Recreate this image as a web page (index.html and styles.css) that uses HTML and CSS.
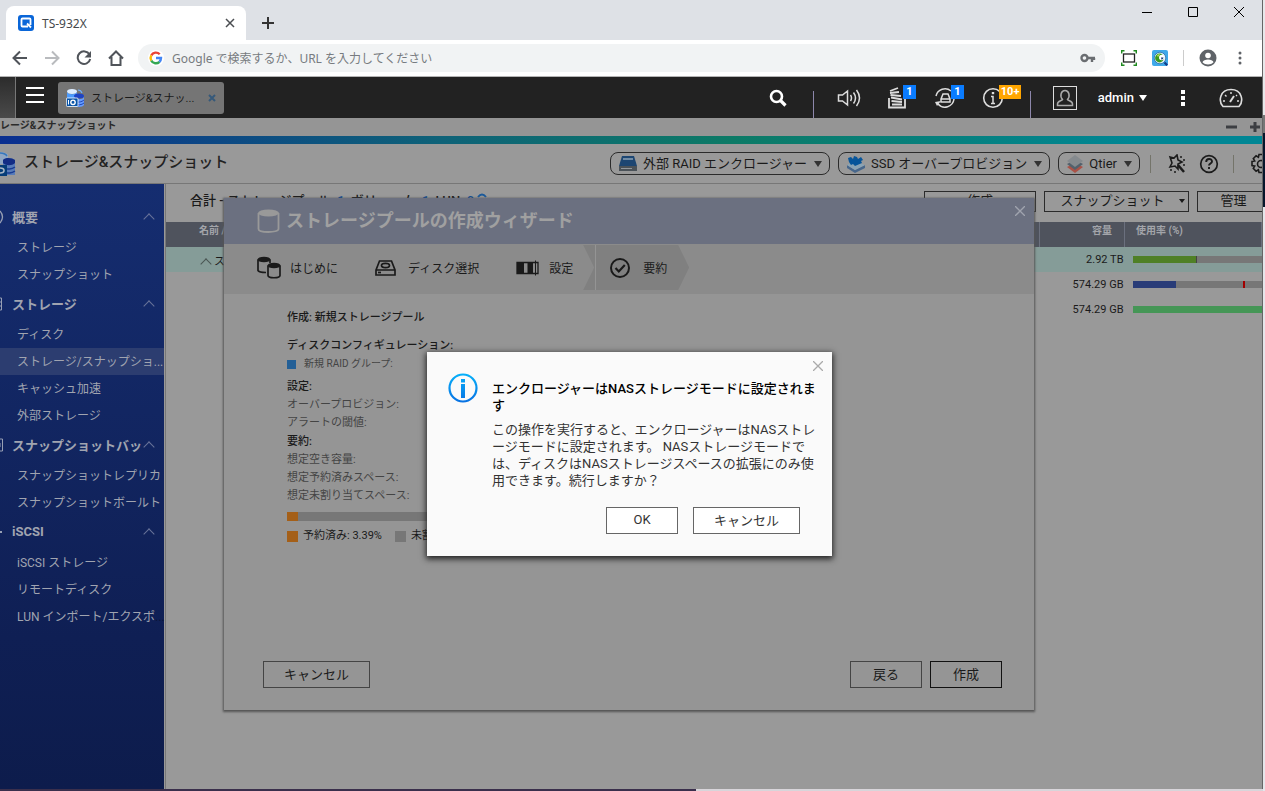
FILE: index.html
```html
<!DOCTYPE html>
<html lang="ja">
<head>
  <meta charset="UTF-8">
  <meta name="viewport" content="width=device-width, initial-scale=1.0">
  <title>TS-932X</title>
  <link rel="stylesheet" href="styles.css">
</head>
<body>
<div class="browser">

  <!-- Tab strip -->
  <div class="tab-strip">
    <div class="tab">
      <svg width="16" height="16" viewBox="0 0 16 16"><rect width="16" height="16" rx="3" fill="#0a66d8"/><path d="M10 11.5H4.500a1 1 0 0 1-1-1v-6a1 1 0 0 1 1-1h7a1 1 0 0 1 1 1V10M9 8.500l4 4" fill="none" stroke="#fff" stroke-width="1.800"/></svg>
      <span class="tab-title">TS-932X</span>
      <button class="icon-btn" aria-label="タブを閉じる"><svg width="10" height="10" viewBox="0 0 10 10"><path d="M1 1l8 8M9 1L1 9" stroke="#4a4d51" stroke-width="1.500"/></svg></button>
    </div>
    <button class="icon-btn new-tab" aria-label="新しいタブ"><svg width="12" height="12" viewBox="0 0 12 12"><path d="M6 0v12M0 6h12" stroke="#333" stroke-width="2"/></svg></button>
    <div class="window-controls">
      <button class="icon-btn" aria-label="最小化"><svg width="10" height="10" viewBox="0 0 10 10"><path d="M0 5.500h10" stroke="#000"/></svg></button>
      <button class="icon-btn" aria-label="最大化"><svg width="10" height="10" viewBox="0 0 10 10"><path d="M.5.5h9v9h-9z" fill="none" stroke="#000"/></svg></button>
      <button class="icon-btn" aria-label="閉じる"><svg width="10" height="10" viewBox="0 0 10 10"><path d="M0 0l10 10M10 0L0 10" stroke="#000"/></svg></button>
    </div>
  </div>

  <!-- Address bar -->
  <div class="toolbar">
    <button class="icon-btn" aria-label="戻る"><svg width="16" height="16" viewBox="0 0 16 16"><path d="M15 8H2M8 1.500L1.500 8 8 14.500" fill="none" stroke="#50545a" stroke-width="2"/></svg></button>
    <button class="icon-btn" aria-label="進む"><svg width="16" height="16" viewBox="0 0 16 16"><path d="M1 8h13M8 1.500L14.500 8 8 14.500" fill="none" stroke="#b9bbbe" stroke-width="2"/></svg></button>
    <button class="icon-btn" aria-label="再読み込み"><svg width="16" height="16" viewBox="0 0 16 16"><path d="M13.500 4.500A6.300 6.300 0 1 0 14.200 9" fill="none" stroke="#50545a" stroke-width="2"/><path d="M15 1v6.500H8.500z" fill="#50545a"/></svg></button>
    <button class="icon-btn" aria-label="ホーム"><svg width="16" height="16" viewBox="0 0 16 16"><path d="M1 8.500L8 1.500l7 7M3.500 7v8h9V7" fill="none" stroke="#50545a" stroke-width="2"/></svg></button>
    <div class="omnibox">
      <svg width="16" height="16" viewBox="0 0 16 16"><circle cx="8" cy="8" r="8" fill="#fff"/><g fill="none" stroke-width="2.400"><path d="M3.300 5.400A5.200 5.200 0 0 1 11.700 4.300" stroke="#ea4335"/><path d="M3.300 10.600a5.300 5.300 0 0 1 0-5.200" stroke="#fbbc05"/><path d="M11.500 11.800a5.200 5.200 0 0 1-8.200-1.200" stroke="#34a853"/><path d="M8 8h5a5.300 5.300 0 0 1-1.600 3.800" stroke="#4285f4"/></g></svg>
      <input type="text" aria-label="アドレス" placeholder="Google で検索するか、URL を入力してください">
      <svg width="16" height="10" viewBox="0 0 16 10"><circle cx="4.500" cy="5" r="3" fill="none" stroke="#6a6d71" stroke-width="2.400"/><path d="M7 5h8M12 5v4M14 5v2" stroke="#6a6d71" stroke-width="2.400"/></svg>
    </div>
    <div class="extensions">
      <svg width="16" height="16" viewBox="0 0 16 16"><path d="M.7 3.500V.7h2.800M12.500.7h2.800v2.800M15.300 12.500v2.800h-2.800M3.500 15.300H.7v-2.800" fill="none" stroke="#1f8a1f" stroke-width="1.400"/><rect x="2.500" y="4" width="11" height="8" fill="none" stroke="#222" stroke-width="1.300"/></svg>
      <svg width="16" height="16" viewBox="0 0 16 16"><rect width="16" height="16" rx="2" fill="#3fa9ea"/><circle cx="8" cy="8" r="5.800" fill="#dff0fa" stroke="#2c6ea6" stroke-width=".8"/><circle cx="7.500" cy="8" r="4.400" fill="#3a9a1d"/><path d="M5 5.500q1.500-2 3-1.500L6 7z" fill="#c5e35a"/><circle cx="9.700" cy="7.500" r="2.700" fill="#fff"/><path d="M9 7.500h2.500a2.500 2.500 0 0 1-2 2.300z" fill="#1c3f7a"/><path d="M12.500 12.500l2.800 2.800" stroke="#123c8a" stroke-width="2.200"/></svg>
      <span class="ext-divider"></span>
      <svg width="18" height="18" viewBox="0 0 18 18"><circle cx="9" cy="9" r="8.500" fill="#5f6368"/><circle cx="9" cy="6.500" r="2.800" fill="#fff"/><path d="M3.500 13.300c1-3.600 10-3.600 11 0-2.800 3-8.200 3-11 0z" fill="#fff"/></svg>
      <svg width="4" height="14" viewBox="0 0 4 14" fill="#5f6368"><circle cx="2" cy="2" r="1.500"/><circle cx="2" cy="7" r="1.500"/><circle cx="2" cy="12" r="1.500"/></svg>
    </div>
  </div>

  <!-- QTS desktop bar -->
  <div class="desktop-bar">
    <span class="desktop-edge"></span>
    <button class="icon-btn burger" aria-label="メニュー"><svg width="18" height="16" viewBox="0 0 18 16"><path d="M0 1h18M0 8h18M0 15h18" stroke="#fff" stroke-width="2"/></svg></button>
    <div class="task">
      <svg width="18" height="18" viewBox="0 0 18 18"><ellipse cx="6" cy="2.500" rx="5" ry="2.500" fill="#dcecff"/><path d="M1 3v6h10V3c-1 3-9 3-10 0z" fill="#4b9bff"/><path d="M12 1q3 0 4 3" fill="none" stroke="#6fb0ff" stroke-width="1.200"/><ellipse cx="13" cy="7" rx="5" ry="2.500" fill="#1d43c4"/><path d="M8 8v8c1 2.500 9 2.500 10 0V8c-1 3-9 3-10 0z" fill="#669dff"/><path d="M9 12c2 2 7 1 9-1M9 15c2 1.500 7 1 9-1" stroke="#2047b8" fill="none"/><rect x=".4" y="9" width="11.600" height="8.500" rx="1" fill="#0753a8" stroke="#fff" stroke-width=".8"/><circle cx="7" cy="13.300" r="2.200" fill="none" stroke="#fff" stroke-width="1.400"/><path d="M2.500 11v4.500" stroke="#fff"/></svg>
      <span class="task-name">ストレージ&amp;スナッ...</span>
      <button class="icon-btn" aria-label="閉じる"><svg width="8" height="8" viewBox="0 0 8 8"><path d="M1 1l6 6M7 1L1 7" stroke="#36597a" stroke-width="2"/></svg></button>
    </div>
    <div class="tray">
      <button class="icon-btn tray-search" aria-label="検索"><svg width="18" height="18" viewBox="0 0 18 18"><circle cx="7.500" cy="7.500" r="5.500" fill="none" stroke="#fff" stroke-width="2.600"/><path d="M11.500 11.500l5 5" stroke="#fff" stroke-width="3.200"/></svg></button>
      <span class="tray-divider"></span>
      <div class="tray-group">
        <button class="icon-btn" aria-label="音量"><svg width="24" height="20" viewBox="0 0 24 20"><g fill="none" stroke="#ddd" stroke-width="1.500"><path d="M1.500 7v6h4l5 4V3l-5 4zM13.500 7q2 3 0 6M16.500 4.500q4 5.500 0 11M19.500 2q6 8 0 16"/></g></svg></button>
        <button class="icon-btn" aria-label="タスク"><svg width="20" height="22" viewBox="0 0 20 22"><path d="M2 11v9.500h16V11" fill="none" stroke="#ddd" stroke-width="1.800"/><path d="M5 17.500h10M4.500 14l10.500 1M4 10.500l11 2M3.500 8L14 9M3 6l9-1M3 4l8-3" stroke="#ddd" stroke-width="1.800"/></svg><span class="badge">1</span></button>
        <button class="icon-btn" aria-label="外部デバイス"><svg width="22" height="22" viewBox="0 0 22 22"><g fill="none" stroke="#ddd" stroke-width="1.500"><path d="M2 9A9.200 9.200 0 0 1 17 4M20 12A9.200 9.200 0 0 1 4 17"/><path d="M7 12l2-5h5l2 5v3H7zM7 12h9"/></g><path d="M1 15l6-1-4 5z" fill="#ddd"/></svg><span class="badge">1</span></button>
        <button class="icon-btn" aria-label="通知"><svg width="22" height="22" viewBox="0 0 22 22"><circle cx="11" cy="11" r="9.300" fill="none" stroke="#ddd" stroke-width="1.600"/><path d="M9 9.500h2v7M9 16.500h4" fill="none" stroke="#ddd" stroke-width="1.500"/><path d="M11 5v2.200" stroke="#ddd" stroke-width="2.400"/></svg><span class="badge badge-warn">10+</span></button>
      </div>
      <span class="tray-divider"></span>
      <button class="icon-btn user" aria-label="ユーザー"><svg width="24" height="24" viewBox="0 0 24 24"><g fill="none" stroke="#aaa"><rect x=".5" y=".5" width="23" height="23" stroke="#ddd"/><path d="M9.500 13.500C6.500 10 8 4.500 12 4.500s5.500 5.500 2.500 9c1 1.500 5 1.500 5 4.500v1.500h-15V18c0-3 4-3 5-4.500z" stroke-width="1.500"/></g></svg></button>
      <button class="admin">admin <span class="caret"></span></button>
      <button class="icon-btn" aria-label="その他"><svg width="6" height="18" viewBox="0 0 6 18" fill="#fff"><path d="M1 1h4v4H1zM1 7h4v4H1zM1 13h4v4H1z"/></svg></button>
      <button class="icon-btn gauge" aria-label="ダッシュボード"><svg width="24" height="20" viewBox="0 0 24 20"><path d="M4 18.500C-1 13 1 1.500 12 1.500S25 13 20 18.500z" fill="none" stroke="#ddd" stroke-width="1.600"/><path d="M11 14l4-6" stroke="#ddd" stroke-width="2"/><path d="M4 13h2M18 13h2M6 7l1.500 1.500M12 4v2M18 7l-1 1" stroke="#ddd" stroke-width="1.400"/></svg></button>
    </div>
  </div>

  <!-- Storage & Snapshots window -->
  <div class="app">
    <div class="app-titlebar">
      <span class="app-title">レージ&amp;スナップショット</span>
      <button class="icon-btn" aria-label="最小化"><svg width="12" height="12" viewBox="0 0 12 12"><path d="M0 6h11" stroke="#3c3e42" stroke-width="3"/></svg></button>
      <button class="icon-btn" aria-label="最大化"><svg width="12" height="12" viewBox="0 0 12 12"><path d="M1 6h10M6 1v10" stroke="#3c3e42" stroke-width="3"/></svg></button>
    </div>
    <div class="app-stripe"></div>
    <header class="app-header">
      <svg class="app-icon" width="16" height="26" viewBox="0 0 16 26"><path d="M0 1c5 0 8 2 8 3v9H0z" fill="#8fa6c4"/><path d="M0 2q5 0 7 3" fill="none" stroke="#3777bd" stroke-width="1.500"/><path d="M3 9c3-3 9-2 12 0v15H3z" fill="#587cb9"/><path d="M3 9c3-3 9-2 12 0v3c-3 3-9 3-12 0z" fill="#132d85"/><path d="M4 17c3 2 8 1 11-1M4 21c3 2 8 1 11-1" fill="none" stroke="#193d93" stroke-width="1.500"/><path d="M0 14h7v11H0z" fill="#063d78"/><path d="M0 17q4 0 4 2.500T0 22" fill="none" stroke="#a9b6c5" stroke-width="1.600"/></svg>
      <h1>ストレージ&amp;スナップショット</h1>
      <div class="header-actions">
        <button class="pill"><svg width="20" height="20" viewBox="0 0 20 20"><path d="M4 2h12l3 10H1z" fill="#1d4672"/><path d="M5 5h10" stroke="#6f8ba5" stroke-width="2"/><path d="M1 12h18v5H1z" fill="#4b5258"/><path d="M3 14.500h11" stroke="#92979c"/></svg>外部 RAID エンクロージャー<span class="caret"></span></button>
        <button class="pill"><svg width="20" height="20" viewBox="0 0 20 20"><path d="M1 11l8 5 10-5v3l-10 5-8-5z" fill="#48678b"/><path d="M1 11l7-4 11 4-10 5z" fill="#8ba4b5"/><path d="M2 4l3-1 2 2 1-3 3 1 1 2 3-2 2 3-2 1 1 2-7 3-2-2-2 1-2-3z" fill="#07559a"/></svg>SSD オーバープロビジョン<span class="caret"></span></button>
        <button class="pill"><svg width="18" height="20" viewBox="0 0 18 20"><path d="M1 13l8-4 8 4-8 6z" fill="#a95247"/><path d="M1 10l8-4 8 4-8 6z" fill="#52616c"/><path d="M1 7l8-6 8 6-8 6z" fill="#858a8e"/></svg>Qtier<span class="caret"></span></button>
        <span class="header-divider"></span>
        <button class="icon-btn" aria-label="ツール"><svg width="20" height="20" viewBox="0 0 20 20"><path d="M3 3l4 1 3-3 1 5 4 2-4 2v5l-3-3-5 1 2-4z" fill="none" stroke="#1b1b1b" stroke-width="1.600"/><path d="M11 11l6 7" stroke="#1b1b1b" stroke-width="2.500"/><path d="M14 2v2M17 5v2M17 10v2M4 15v2M8 17v2" stroke="#1b1b1b" stroke-width="1.500"/></svg></button>
        <button class="icon-btn" aria-label="ヘルプ"><svg width="20" height="20" viewBox="0 0 20 20"><circle cx="10" cy="10" r="8.300" fill="none" stroke="#1b1b1b" stroke-width="1.700"/><path d="M7.200 8c0-4 5.800-4 5.800-.5 0 2-3 2-3 4M10 13v2" fill="none" stroke="#1b1b1b" stroke-width="1.900"/></svg></button>
        <span class="header-divider"></span>
        <button class="icon-btn gear" aria-label="設定"><svg width="22" height="22" viewBox="0 0 22 22"><circle cx="11" cy="11" r="3.500" fill="none" stroke="#1b1b1b" stroke-width="1.600"/><path d="M9 1.500h4l.6 2.700 2.300-1.400 2.800 2.800-1.400 2.300 2.700.6v4l-2.700.6 1.400 2.300-2.800 2.800-2.300-1.400-.6 2.700H9l-.6-2.700-2.300 1.400-2.800-2.800 1.400-2.300-2.700-.6v-4l2.700-.6-1.400-2.300 2.800-2.800 2.300 1.400z" fill="none" stroke="#1b1b1b" stroke-width="1.600"/></svg></button>
      </div>
    </header>

    <div class="app-body">
      <nav class="sidebar">
        <h2><svg class="menu-icon" width="4" height="14" viewBox="0 0 4 14"><path d="M0 1q5 6 0 12" fill="none" stroke="#98a0b4" stroke-width="1.300"/></svg><span>概要</span><i class="chevron"></i></h2>
        <a href="#">ストレージ</a>
        <a href="#">スナップショット</a>
        <h2><svg class="menu-icon" width="4" height="14" viewBox="0 0 4 14"><path d="M0 1h1.500v12H0M0 5h2M0 9h2" fill="none" stroke="#98a0b4"/></svg><span>ストレージ</span><i class="chevron"></i></h2>
        <a href="#">ディスク</a>
        <a href="#" class="active">ストレージ/スナップショ...</a>
        <a href="#">キャッシュ加速</a>
        <a href="#">外部ストレージ</a>
        <h2><svg class="menu-icon" width="4" height="14" viewBox="0 0 4 14"><path d="M0 1h2.500v12H0M0 5v4" fill="none" stroke="#98a0b4"/></svg><span>スナップショットバッ</span><i class="chevron"></i></h2>
        <a href="#">スナップショットレプリカ</a>
        <a href="#">スナップショットボールト</a>
        <h2><svg class="menu-icon" width="4" height="14" viewBox="0 0 4 14"><path d="M0 7h2" stroke="#98a0b4" stroke-width="2"/></svg><span>iSCSI</span><i class="chevron"></i></h2>
        <a href="#">iSCSI ストレージ</a>
        <a href="#">リモートディスク</a>
        <a href="#">LUN インポート/エクスポ<span class="more">...</span></a>
      </nav>

      <main class="content">
        <div class="summary">
          <p>合計 - ストレージプール: <a href="#">1</a>, ボリューム: <a href="#">1</a>, LUN: <a href="#">0</a> <svg width="10" height="12" viewBox="0 0 10 12"><path d="M1 4q4-5 8 0" fill="none" stroke="#1b5a9b" stroke-width="2"/></svg></p>
          <button class="action action-create">作成</button>
          <button class="action action-snap">スナップショット<span class="caret"></span></button>
          <button class="action action-manage">管理</button>
        </div>
        <table>
          <colgroup><col><col class="col-size"><col class="col-usage"></colgroup>
          <thead>
            <tr><th class="name">名前 /</th><th class="size">容量</th><th>使用率 (%)</th></tr>
          </thead>
          <tbody>
            <tr class="selected"><td class="name"><i class="chevron"></i>スト</td><td class="size">2.92 TB</td><td><div class="usage"><span class="used pool" style="width: 50%"></span></div></td></tr>
            <tr><td></td><td class="size">574.29 GB</td><td><div class="usage"><span class="used volume" style="width: 34%"></span><span class="alert" style="margin-left: 52%"></span></div></td></tr>
            <tr><td></td><td class="size">574.29 GB</td><td><div class="usage"><span class="used lun" style="width: 100%"></span></div></td></tr>
          </tbody>
        </table>

        <!-- Create pool wizard -->
        <section class="wizard">
          <div class="wizard-head">
            <svg width="24" height="24" viewBox="0 0 24 24"><path d="M1.500 4v16c0 4 20 4 20 0V4" fill="none" stroke="#999" stroke-width="1.800"/><ellipse cx="11.500" cy="4" rx="10.500" ry="3.500" fill="#999"/></svg>
            <h2>ストレージプールの作成ウィザード</h2>
            <button class="icon-btn wizard-close" aria-label="閉じる"><svg width="10" height="10" viewBox="0 0 10 10"><path d="M0 0l10 10M10 0L0 10" stroke="#a0a4ae" stroke-width="1.300"/></svg></button>
          </div>
          <ol class="steps">
            <li><svg width="24" height="24" viewBox="0 0 24 24"><g fill="none" stroke="#1a1a1a" stroke-width="1.700"><path d="M1 3.500v11c1 2 5 2 8 2M13 3.500V7"/><path d="M11 9.500v10c0 3 12 3 12 0v-10"/></g><ellipse cx="7" cy="3.500" rx="6.500" ry="2.800" fill="#1a1a1a"/><ellipse cx="17" cy="9.500" rx="6.500" ry="2.800" fill="#1a1a1a"/></svg>はじめに</li>
            <li><svg width="24" height="24" viewBox="0 0 24 24"><g fill="none" stroke="#1a1a1a" stroke-width="1.700"><path d="M1 14L4.500 5h12L20 14v5H1zM1 14h19"/><ellipse cx="10.500" cy="9.500" rx="4" ry="2.200"/><path d="M3 16.500h3"/></g></svg>ディスク選択</li>
            <li><svg width="24" height="24" viewBox="0 0 24 24"><path d="M1 6.500h21v11H1z" fill="none" stroke="#1a1a1a" stroke-width="1.300"/><path d="M1 6h7v12H1zM11.500 6H17v12h-5.500z" fill="#1a1a1a"/><path d="M19.500 4.500v15" stroke="#1a1a1a"/></svg>設定</li>
            <li class="current"><svg width="24" height="24" viewBox="0 0 24 24"><circle cx="10" cy="12" r="9" fill="none" stroke="#1a1a1a" stroke-width="2"/><path d="M5.500 12l3.300 3.500 6-6.500" fill="none" stroke="#1a1a1a" stroke-width="2.200"/></svg>要約</li>
          </ol>
          <div class="wizard-body">
            <h3>作成: 新規ストレージプール</h3>
            <h3 class="spaced">ディスクコンフィギュレーション:</h3>
            <p class="raid"><span class="swatch blue"></span>新規 RAID グループ:</p>
            <h3>設定:</h3>
            <p>オーバープロビジョン:</p>
            <p>アラートの閾値:</p>
            <h3>要約:</h3>
            <p>想定空き容量:</p>
            <p>想定予約済みスペース:</p>
            <p>想定未割り当てスペース:</p>
            <div class="capacity"><span style="width: 3.39%"></span></div>
            <div class="legend"><span class="swatch orange"></span>予約済み: 3.39%<span class="swatch gray"></span>未割</div>
          </div>
          <div class="wizard-foot">
            <button class="btn wide">キャンセル</button>
            <button class="btn back">戻る</button>
            <button class="btn primary">作成</button>
          </div>
        </section>
      </main>
    </div>

    <!-- Confirmation -->
    <div class="overlay">
      <div class="dialog" role="alertdialog" aria-labelledby="dialogTitle">
        <button class="icon-btn dialog-close" aria-label="閉じる"><svg width="10" height="10" viewBox="0 0 10 10"><path d="M0 0l10 10M10 0L0 10" stroke="#aaa" stroke-width="1.300"/></svg></button>
        <svg width="30" height="30" viewBox="0 0 30 30"><defs><linearGradient id="info" x1="0" y1="0" x2="0" y2="30" gradientUnits="userSpaceOnUse"><stop stop-color="#06b2fa"/><stop offset="1" stop-color="#0870e2"/></linearGradient></defs><circle cx="15" cy="15" r="13.500" fill="none" stroke="url(#info)" stroke-width="2.200"/><path d="M13 11h4v14h-4zM13 6h4v3.500h-4z" fill="url(#info)"/></svg>
        <div class="dialog-text">
          <h2 id="dialogTitle">エンクロージャーはNASストレージモードに設定されま<br>す</h2>
          <p>この操作を実行すると、エンクロージャーはNASストレ<br>ージモードに設定されます。 NASストレージモードで<br>は、ディスクはNASストレージスペースの拡張にのみ使<br>用できます。続行しますか？</p>
          <div class="dialog-buttons">
            <button class="btn">OK</button>
            <button class="btn wide">キャンセル</button>
          </div>
        </div>
      </div>
    </div>
  </div>
</div>
</body>
</html>
```
FILE: styles.css
```css
* {
  box-sizing: border-box;
}

body {
  margin: 0;
  height: 100vh;
  padding: 0 2px 2px 0;
  overflow: hidden;
  font-family: Roboto, "Noto Sans CJK JP", sans-serif;
  font-size: 12px;
  color: #1a1a1a;
  background:
    linear-gradient(#e8e8ea 0 115px, #777 115px 133px, #07162c 133px 207px, #e6e6ea 207px) right top / 2px 100% no-repeat,
    linear-gradient(90deg, #3a2f4c 0 55%, #d8d5da 55%);
}

h1, h2, h3, p, ol {
  margin: 0;
  padding: 0;
}

button {
  font: inherit;
  color: inherit;
  cursor: pointer;
}

a {
  color: inherit;
  text-decoration: none;
}

svg {
  flex: none;
  display: block;
}

.icon-btn {
  display: flex;
  align-items: center;
  justify-content: center;
  flex: none;
  padding: 0;
  border: none;
  background: none;
}

.caret {
  border: 4px solid transparent;
  border-top: 6px solid currentColor;
  border-bottom: 0;
}

.browser {
  height: 100%;
  display: flex;
  flex-direction: column;
  overflow: hidden;
  border-right: 1px solid #666;
}

/* Browser chrome */
.tab-strip {
  display: flex;
  height: 40px;
  flex: none;
  padding: 6px 18px 0 6px;
  background: #dee1e6;
}

.tab {
  display: flex;
  align-items: center;
  width: 240px;
  padding: 0 11px 0 12px;
  border-radius: 8px 8px 0 0;
  background: #fff;
}

.tab-title {
  flex: 1;
  margin-left: 8px;
  font-family: "Noto Sans", sans-serif;
  color: #45484c;
}

.new-tab {
  margin-left: 16px;
}

.window-controls {
  display: flex;
  gap: 36px;
  height: 12px;
  margin-left: auto;
}

.toolbar {
  display: flex;
  align-items: center;
  gap: 16px;
  height: 37px;
  flex: none;
  padding: 0 20px 0 12px;
  border-bottom: 1px solid #b4b4b4;
  background: #fff;
}

.omnibox {
  display: flex;
  align-items: center;
  flex: 1;
  height: 28px;
  margin-left: -2px;
  padding: 0 9px 0 10px;
  border-radius: 14px;
  background: #f1f3f4;
}

.omnibox input {
  flex: 1;
  padding: 0 8px;
  border: none;
  background: none;
  font: 12px "Noto Sans", "Noto Sans CJK JP", sans-serif;
}

.omnibox input::placeholder {
  color: #777b80;
}

.extensions {
  display: flex;
  align-items: center;
  gap: 15px;
}

.extensions svg:last-child {
  margin-left: 6px;
}

.ext-divider {
  width: 1px;
  height: 16px;
  background: #ccc;
}

/* Desktop bar */
.desktop-bar {
  display: flex;
  align-items: center;
  height: 41px;
  flex: none;
  background: #222;
}

.desktop-edge {
  width: 16px;
  height: 100%;
  border-right: 1px solid #777;
  background: linear-gradient(#2c2c2c, #4a4a4a);
}

.burger {
  width: 38px;
  padding-bottom: 6px;
}

.task {
  display: flex;
  align-items: center;
  width: 166px;
  height: 32px;
  margin-left: 4px;
  padding: 0 8px;
  border-radius: 3px;
  background: #757575;
}

.task-name {
  flex: 1;
  margin-left: 7px;
  padding-bottom: 2px;
  font-size: 11px;
  white-space: nowrap;
}

.tray {
  display: flex;
  align-items: center;
  height: 100%;
  margin-left: auto;
  padding-right: 19px;
}

.tray-search {
  width: 70px;
}

.tray-divider {
  width: 1px;
  height: 27px;
  align-self: flex-end;
  background: #8d87ab;
}

.tray-group {
  display: flex;
  padding: 0 13px 0 11px;
}

.tray-group .icon-btn {
  position: relative;
  width: 48px;
}

.badge {
  position: absolute;
  top: -2px;
  left: 30px;
  min-width: 13px;
  padding: 0 2px;
  background: #0a7cff;
  color: #fff;
  font-size: 11px;
  font-weight: bold;
  line-height: 14px;
}

.badge-warn {
  background: #ffa500;
}

.user {
  margin: 0 21px 0 22px;
}

.admin {
  display: flex;
  align-items: center;
  gap: 5px;
  margin-right: 33px;
  padding: 0;
  border: none;
  background: none;
  color: #fff;
  font-size: 13px;
  font-weight: 500;
}

.gauge {
  margin-left: 33px;
}

/* Storage & Snapshots window */
.app {
  position: relative;
  display: flex;
  flex-direction: column;
  flex: 1;
  min-height: 0;
  background: #999;
}

.app-titlebar {
  display: flex;
  align-items: center;
  gap: 11px;
  height: 18px;
  flex: none;
  padding-right: 1px;
  background: #959595;
}

.app-title {
  flex: 1;
  padding-bottom: 3px;
  font-size: 10px;
  font-weight: bold;
  line-height: 15px;
  color: #2b2b2b;
}

.app-stripe {
  height: 8px;
  flex: none;
  background: linear-gradient(90deg, #0a2f90, #0e6278 35%, #0c7a66 58%, #008694 90%);
}

.app-header {
  display: flex;
  align-items: center;
  height: 40px;
  flex: none;
  border-bottom: 1px solid #777;
}

.app-header h1 {
  margin-left: 8px;
  padding-bottom: 6px;
  font-size: 15px;
  font-weight: 500;
  color: #222;
}

.header-actions {
  display: flex;
  align-items: center;
  gap: 8px;
  margin-left: auto;
}

.pill {
  display: flex;
  align-items: center;
  gap: 5px;
  height: 23px;
  padding: 0 7px;
  border: 1px solid #2b2b2b;
  border-radius: 8px;
  background: none;
  font-size: 13px;
  line-height: 19px;
  white-space: nowrap;
}

.pill .caret {
  margin-left: 2px;
  color: #333;
}

.header-divider {
  width: 1px;
  height: 18px;
  margin: 0 8px 0 2px;
  background: #74746a;
}

.header-actions .icon-btn {
  margin-right: 4px;
}

.header-actions .gear {
  margin-right: -10px;
}

.app-body {
  display: flex;
  flex: 1;
  min-height: 0;
}

.sidebar {
  width: 164px;
  flex: none;
  padding-top: 17px;
  background: linear-gradient(#152d70, #0f1f54 75%, #0d1c4c);
  color: #a0a4b0;
}

.sidebar h2 {
  display: flex;
  align-items: center;
  height: 33px;
  padding: 0 10px 2px 0;
  font-size: 13px;
  font-weight: bold;
  white-space: nowrap;
}

.sidebar h2 span {
  flex: 1;
  min-width: 0;
  margin-left: 8px;
}

.sidebar a {
  display: block;
  height: 27px;
  padding-left: 17px;
  white-space: nowrap;
  line-height: 28px;
}

.sidebar .active {
  background: #2c3d70;
}

.more {
  color: #0a1436;
}

.chevron {
  width: 8px;
  height: 8px;
  margin: 5px 1px 0 0;
  border: 1px solid #69749a;
  border-width: 1px 0 0 1px;
  transform: rotate(45deg);
}

.content {
  position: relative;
  flex: 1;
  min-width: 0;
  overflow: hidden;
  margin-left: 1px;
  border-left: 1px solid #777;
}

.summary {
  display: flex;
  align-items: flex-start;
  gap: 8px;
  height: 38px;
  padding-top: 7px;
}

.summary p {
  flex: 1;
  padding-left: 24px;
  font-size: 13px;
  font-weight: 500;
  line-height: 19px;
}

.summary p a {
  color: #0c4b95;
}

.summary svg {
  display: inline-block;
}

.action {
  display: flex;
  align-items: center;
  justify-content: center;
  flex: none;
  height: 21px;
  padding: 0 0 2px;
  border: 1px solid #2b2b2b;
  background: none;
  font-size: 13px;
  line-height: 17px;
}

.action-create {
  width: 112px;
}

.action-snap {
  width: 145px;
  gap: 14px;
  padding-left: 12px;
}

.action-snap .caret {
  border-width: 4px 3px 0;
}

.action-manage {
  width: 73px;
  margin-right: -8px;
}

table {
  width: 100%;
  table-layout: fixed;
  border-collapse: collapse;
}

.col-size {
  width: 85px;
}

.col-usage {
  width: 137px;
}

th, td {
  height: 25px;
  padding: 0;
  font-size: 11px;
  text-align: left;
  white-space: nowrap;
}

th {
  padding: 0 0 8px 11px;
  border-right: 1px solid #6b707e;
  background: #4f535d;
  color: #a3a5aa;
  font-size: 10px;
  line-height: 15px;
}

th.name {
  padding-left: 33px;
}

th.size {
  padding-right: 12px;
  text-align: right;
}

td.name {
  padding-left: 36px;
}

td.size {
  padding-right: 1px;
  text-align: right;
}

td .chevron {
  display: inline-block;
  margin: 0 4px -3px 0;
  border-color: #4a5553;
}

.selected {
  background: #859c98;
}

.usage {
  display: flex;
  height: 7px;
  margin-left: 8px;
  background: #777;
}

.pool {
  border-right: 1px solid #444;
  background: #4f8026;
}

.volume {
  background: #293c78;
}

.lun {
  background: #459656;
}

.alert {
  width: 2px;
  background: #a30000;
}

/* Wizard */
.wizard {
  position: absolute;
  inset: 14px 228px 79px 58px;
  display: flex;
  flex-direction: column;
  background: #959595;
  box-shadow: 0 1px 2px 1px #555;
}

.wizard-head {
  display: flex;
  align-items: center;
  height: 46px;
  flex: none;
  padding-left: 33px;
  background: #6b7080;
  color: #a0a0a0;
}

.wizard-head h2 {
  margin-left: 5px;
  padding-bottom: 4px;
  font-size: 18px;
  font-weight: bold;
}

.wizard-close {
  align-self: flex-start;
  margin: 8px 9px 0 auto;
}

.steps {
  display: flex;
  align-items: flex-start;
  gap: 37px;
  height: 50px;
  flex: none;
  padding: 1px 0 0 33px;
  background: #8b8b8b;
  list-style: none;
}

.steps li {
  display: flex;
  align-items: center;
  gap: 9px;
  height: 45px;
}

.steps .current {
  width: 106px;
  margin-left: -27px;
  padding-left: 27px;
  background: linear-gradient(90deg, transparent 12px, #949494 12px 13px, transparent 13px), #808080;
  clip-path: polygon(0 0, 95px 0, 100% 50%, 95px 100%, 0 100%, 11px 50%);
}

.wizard-body {
  flex: 1;
  padding: 14px 32px 0 63px;
  color: #444;
  font-size: 11px;
  line-height: 18px;
}

.wizard-body h3 {
  color: #1a1a1a;
  font-size: 11px;
  font-weight: 500;
  line-height: 19px;
}

.wizard-body .spaced {
  margin-top: 9px;
}

.wizard-body .raid {
  display: flex;
  align-items: center;
  gap: 8px;
  margin-bottom: 4px;
  font-size: 10px;
}

.swatch {
  width: 11px;
  height: 11px;
}

.blue {
  width: 9px;
  height: 9px;
  background: #235f96;
}

.orange {
  background: #a45f18;
}

.gray {
  margin-left: 8px;
  background: #777;
}

.capacity {
  display: flex;
  width: 325px;
  height: 9px;
  margin-top: 7px;
  background: #777;
}

.capacity span {
  background: #a45f18;
}

.legend {
  display: flex;
  align-items: center;
  gap: 5px;
  margin-top: 6px;
  color: #1a1a1a;
}

.wizard-foot {
  display: flex;
  gap: 8px;
  padding: 0 32px 22px 39px;
}

.btn {
  width: 72px;
  height: 27px;
  padding: 0 0 2px;
  border: 1px solid #444;
  background: none;
  font-size: 13px;
}

.wide {
  width: 107px;
}

.back {
  margin-left: auto;
}

.primary {
  border-color: #111;
}

/* Dialog */
.overlay {
  position: absolute;
  inset: 0;
  display: flex;
  align-items: center;
  justify-content: center;
  padding-right: 3px;
}

.dialog {
  position: relative;
  display: flex;
  gap: 14px;
  width: 405px;
  padding: 21px 12px 22px 21px;
  background: #fafafa;
  box-shadow: 0 2px 6px 1px #222;
  white-space: nowrap;
}

.dialog h2 {
  padding-top: 7px;
  color: #000;
  font-size: 13px;
  font-weight: 500;
  line-height: 17px;
}

.dialog p {
  margin: 7px 0 18px;
  color: #333;
  font-size: 13px;
  line-height: 17px;
}

.dialog-close {
  position: absolute;
  top: 9px;
  right: 9px;
}

.dialog-buttons {
  display: flex;
  gap: 15px;
  padding-left: 114px;
}

.dialog .btn {
  border-color: #666;
  background: #fff;
  color: #333;
}
```
